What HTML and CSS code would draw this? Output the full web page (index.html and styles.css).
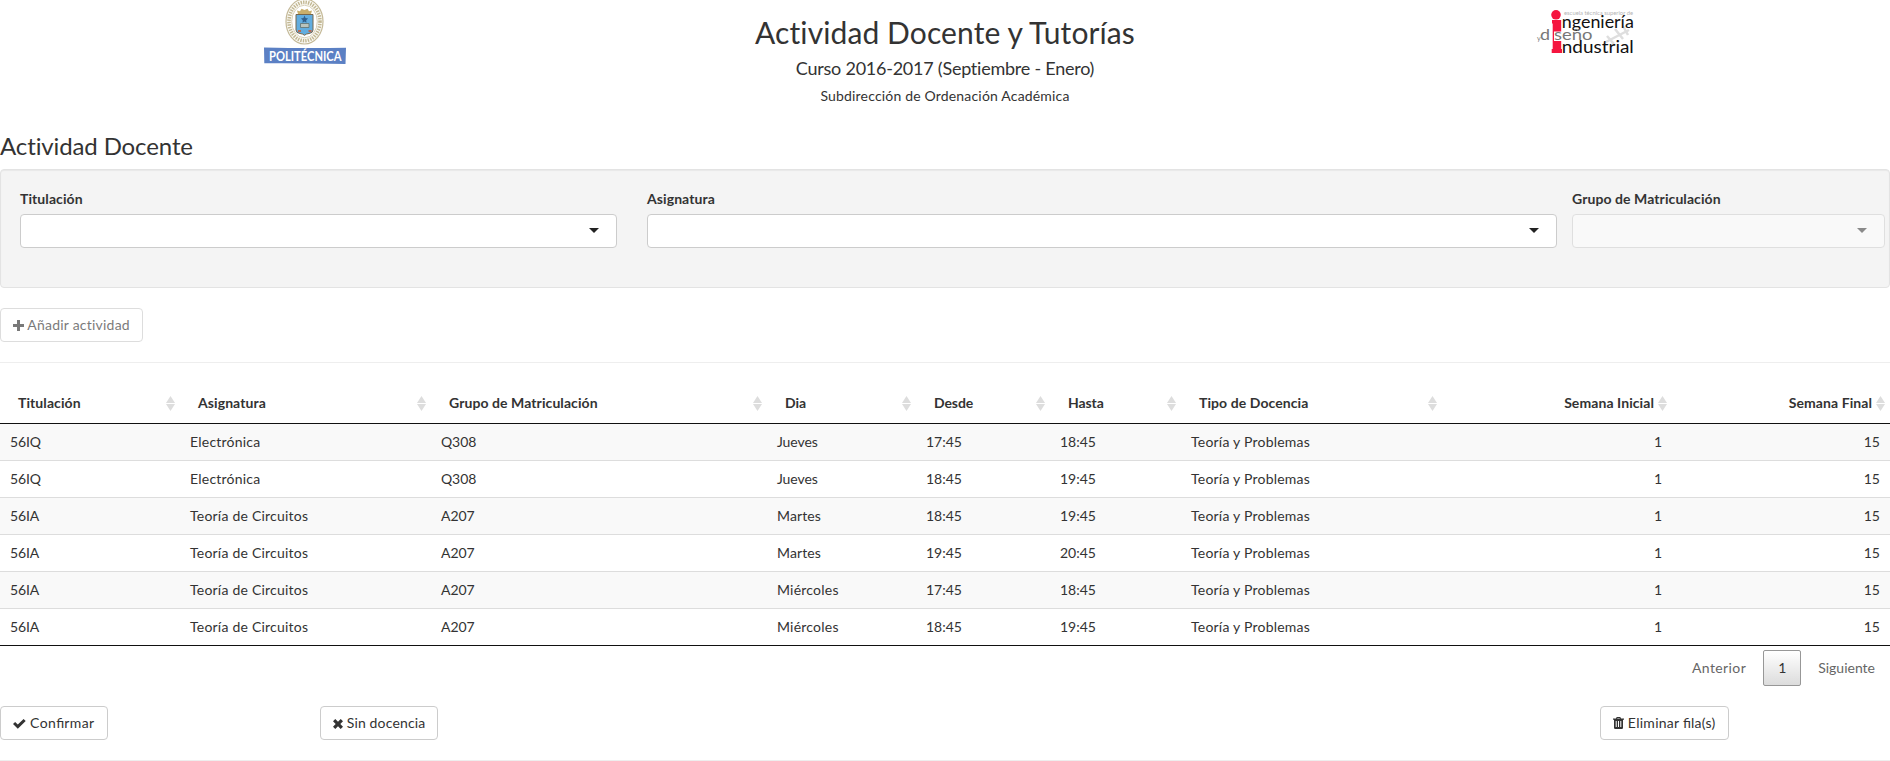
FILE: index.html
```
<!DOCTYPE html>
<html lang="es">
<head>
<meta charset="utf-8">
<title>Actividad Docente y Tutorías</title>
<link rel="stylesheet" href="styles.css">
</head>
<body>
<header class="masthead">
  <div class="brand brand-left">
    <svg class="logo-upm" width="84" height="66" viewBox="0 0 84 66">
      <ellipse cx="40.5" cy="21.500" rx="18.500" ry="22.500" fill="#fbfaf5" stroke="#c4b998" stroke-width="1.200"/>
      <ellipse cx="40.5" cy="21.500" rx="15.500" ry="19.200" fill="none" stroke="#c2b793" stroke-width="3.600" stroke-dasharray="1.400 1.100"/>
      <ellipse cx="40.5" cy="21.500" rx="12.800" ry="16.300" fill="#fff" stroke="#cfc5a8" stroke-width=".8"/>
      <path d="M34 14l-1-3.500 3 .8 1.500-2.600 3 1.300 3-1.300 1.500 2.600 3-.8-1 3.500z" fill="#c9ae6a"/>
      <path d="M32 14.500h17v15.500q0 3-4 3.500-3 .3-4.500 1.800-1.500-1.500-4.500-1.800-4-.5-4-3.500z" fill="#62addf" stroke="#75664d" stroke-width="1"/>
      <path d="M36.500 23.500h8.500v4h-8.500z" fill="#b9c4bd" stroke="#61716f" stroke-width=".8"/>
      <path d="M40.500 15.500l1 2.500 2.600.5-1.900 1.700.3 2.500-2-1.200-2 1.200.3-2.500-1.900-1.700 2.600-.5z" fill="#31608d"/>
      <path d="M34 30h3v2h-3zM44.500 30h3v2h-3z" fill="#bd6a51"/>
      <path d="M0 47.400q42 1 82 .3l-.5 16.400Q40 63 .3 63.300z" fill="#5b80c4"/>
      <text class="upm-name" x="5" y="60.600" textLength="72.500" lengthAdjust="spacingAndGlyphs">POLITÉCNICA</text>
    </svg>
  </div>
  <div class="headline">
    <h1>Actividad Docente y Tutorías</h1>
    <h2>Curso 2016-2017 (Septiembre - Enero)</h2>
    <p>Subdirección de Ordenación Académica</p>
  </div>
  <div class="brand brand-right">
    <svg class="logo-etsidi" width="100" height="60" viewBox="0 0 100 60">
      <path d="M66 43L91 30M69 36l7 8M77 29l8 10M85 26l5 9" stroke="#dedede" stroke-width="2.500" fill="none"/>
      <circle cx="18" cy="14.800" r="4.800" fill="#f5153f"/>
      <path d="M14 20h9.200v29H24v4H13.700v-4h1V23.500H14z" fill="#f5153f"/>
      <path d="M16 31.500h8v9.500h-8z" fill="#fff"/>
      <text class="etsidi-top" x="26" y="14.500" textLength="69" lengthAdjust="spacingAndGlyphs">escuela técnica superior de</text>
      <text class="etsidi-main" x="23.800" y="27.700" textLength="72" lengthAdjust="spacingAndGlyphs">ngeniería</text>
      <text class="etsidi-mid" x="-1" y="41" font-size="7">y</text>
      <text class="etsidi-mid" x="2" y="39.800" font-size="16" textLength="10" lengthAdjust="spacingAndGlyphs">d</text>
      <text class="etsidi-mid" x="16" y="39.800" font-size="15.500" textLength="38.500" lengthAdjust="spacingAndGlyphs">seño</text>
      <text class="etsidi-main" x="23.800" y="52.500" textLength="72" lengthAdjust="spacingAndGlyphs">ndustrial</text>
    </svg>
  </div>
</header>

<h3 class="section-title">Actividad Docente</h3>

<section class="well">
  <div class="field"><label>Titulación</label><div class="select"><i class="caret"></i></div></div>
  <div class="field"><label>Asignatura</label><div class="select"><i class="caret"></i></div></div>
  <div class="field"><label>Grupo de Matriculación</label><div class="select disabled"><i class="caret"></i></div></div>
</section>

<button class="btn btn-add" disabled><svg width="11" height="11" viewBox="0 0 11 11"><path d="M4 0h3v4h4v3H7v4H4V7H0V4h4z"/></svg> Añadir actividad</button>
<hr>

<table class="grid">
  <colgroup><col class="c1"><col class="c2"><col class="c3"><col class="c4"><col class="c5"><col class="c6"><col class="c7"><col class="c8"><col class="c9"></colgroup>
  <thead><tr><th>Titulación</th><th>Asignatura</th><th>Grupo de Matriculación</th><th class="tight">Dia</th><th class="tight">Desde</th><th class="tight">Hasta</th><th>Tipo de Docencia</th><th class="num">Semana Inicial</th><th class="num">Semana Final</th></tr></thead>
  <tbody>
    <tr><td class="code">56IQ</td><td class="wide">Electrónica</td><td class="code">Q308</td><td class="code">Jueves</td><td>17:45</td><td>18:45</td><td class="wide">Teoría y Problemas</td><td class="num">1</td><td class="num">15</td></tr>
    <tr><td class="code">56IQ</td><td class="wide">Electrónica</td><td class="code">Q308</td><td class="code">Jueves</td><td>18:45</td><td>19:45</td><td class="wide">Teoría y Problemas</td><td class="num">1</td><td class="num">15</td></tr>
    <tr><td class="code">56IA</td><td class="wide">Teoría de Circuitos</td><td class="code">A207</td><td class="mid">Martes</td><td>18:45</td><td>19:45</td><td class="wide">Teoría y Problemas</td><td class="num">1</td><td class="num">15</td></tr>
    <tr><td class="code">56IA</td><td class="wide">Teoría de Circuitos</td><td class="code">A207</td><td class="mid">Martes</td><td>19:45</td><td>20:45</td><td class="wide">Teoría y Problemas</td><td class="num">1</td><td class="num">15</td></tr>
    <tr><td class="code">56IA</td><td class="wide">Teoría de Circuitos</td><td class="code">A207</td><td class="wide">Miércoles</td><td>17:45</td><td>18:45</td><td class="wide">Teoría y Problemas</td><td class="num">1</td><td class="num">15</td></tr>
    <tr><td class="code">56IA</td><td class="wide">Teoría de Circuitos</td><td class="code">A207</td><td class="wide">Miércoles</td><td>18:45</td><td>19:45</td><td class="wide">Teoría y Problemas</td><td class="num">1</td><td class="num">15</td></tr>
  </tbody>
</table>

<nav class="pager"><a class="prev">Anterior</a><a class="current">1</a><a>Siguiente</a></nav>

<div class="actions">
  <div class="slot-a"><button class="btn btn-confirm"><svg width="13" height="10" viewBox="0 0 13 10"><path d="M0 5l2.100-2.100 2.700 2.600L10.600 0l2.100 2.100-7.900 7.600z"/></svg> Con<span class="lig">fi</span>rmar</button></div>
  <div class="slot-b"><button class="btn btn-none"><svg width="10" height="10" viewBox="0 0 10 10"><path d="M2.300 0L5 2.700 7.700 0 10 2.300 7.300 5 10 7.700 7.700 10 5 7.300 2.300 10 0 7.700 2.700 5 0 2.300z"/></svg> Sin docencia</button></div>
  <div><button class="btn btn-remove"><svg width="11" height="12" viewBox="0 0 11 12"><path fill-rule="evenodd" d="M3 1.500L3.700 0h3.600L8 1.500h3v1.200h-1v8q0 1.300-1.200 1.300H2.200Q1 12 1 10.700v-8H0V1.500zM4.100 1.500h2.800L6.600 1H4.400zM2.700 4v6h1V4zm2.300 0v6h1V4zm2.300 0v6h1V4z"/></svg> Eliminar <span class="lig">fi</span>la(s)</button></div>
</div>
<hr class="end">
</body>
</html>
```
FILE: styles.css
```
* { box-sizing: border-box; }
html { overflow: hidden; }
body { margin: 0; font: 14px/20px Lato, sans-serif; color: #333; background: #fff; }

.masthead { display: grid; grid-template-columns: 1fr 630px 1fr; height: 121px; }
.brand svg { display: block; overflow: visible; }
.brand-left { padding-left: 264px; }
.brand-right { padding-left: 278px; }
.headline { text-align: center; padding-top: 15px; }
.headline h1 { margin: 0; font-size: 30px; line-height: 35px; font-weight: 400; letter-spacing: .1px; }
.headline h2 { margin: 8px 0 0; font-size: 18px; line-height: 20px; font-weight: 400; letter-spacing: -.24px; }
.headline p { margin: 8px 0 0; letter-spacing: .18px; }
.upm-name { font: 700 13.5px Lato, sans-serif; fill: #fff; }
.etsidi-top { font: 6.5px Lato, sans-serif; fill: #b5b5b5; }
.etsidi-main { font: 17px Lato, sans-serif; fill: #111; }
.etsidi-mid { font-family: Lato, sans-serif; fill: #777; }

.section-title { margin: 0; padding: 11px 0 10px; height: 48px; font-size: 24px; line-height: 27px; font-weight: 400; letter-spacing: -.12px; }

.well { display: grid; grid-template-columns: 612px 910px 313px; column-gap: 15px; height: 119px; padding: 19px 4px 0 19px; border: 1px solid #e3e3e3; border-radius: 4px; background: #f4f4f4; box-shadow: inset 0 1px 1px rgba(0, 0, 0, .05); }
.well .field:first-child .select { width: 597px; }
.field label { display: block; margin-bottom: 5px; font-weight: 700; letter-spacing: .08px; }
.select { display: flex; align-items: center; justify-content: flex-end; height: 34px; padding-right: 17px; border: 1px solid #ccc; border-radius: 4px; background: #fff; }
.select.disabled { opacity: .5; }
.caret { width: 0; height: 0; margin-bottom: 1px; border: 5px solid transparent; border-top-color: #222; border-bottom: 0; }

.btn { height: 34px; padding: 6px 0 6px 12px; border: 1px solid #ccc; border-radius: 4px; background: #fff; color: #333; font: 14px/20px Lato, sans-serif; text-align: left; white-space: nowrap; }
.btn svg { fill: currentColor; vertical-align: -1px; }
.btn[disabled] { opacity: .65; }
.btn-add { display: block; width: 143px; margin-top: 20px; letter-spacing: .22px; }
.btn-confirm { width: 108px; letter-spacing: .42px; }
.btn-none { width: 118px; letter-spacing: .15px; }
.btn-remove { width: 129px; letter-spacing: .27px; }
.lig { letter-spacing: 0; }
hr { margin: 20px 0; border: 0; border-top: 1px solid #eee; }

.grid { width: 1890px; table-layout: fixed; border-collapse: separate; border-spacing: 0; border-bottom: 1px solid #111; }
.c1 { width: 180px; } .c2 { width: 251px; } .c3 { width: 336px; } .c4 { width: 149px; } .c5 { width: 134px; }
.c6 { width: 131px; } .c7 { width: 261px; } .c8 { width: 230px; } .c9 { width: 218px; }
.grid th { position: relative; height: 41px; padding: 10px 18px; border-bottom: 1px solid #111; text-align: left; font-weight: 700; letter-spacing: .08px; }
.grid th.tight { letter-spacing: -.1px; }
.grid th::before, .grid th::after { content: ""; position: absolute; right: 5px; width: 9px; height: 7px; background: #ddd; }
.grid th::before { top: 13px; clip-path: polygon(50% 0, 100% 100%, 0 100%); }
.grid th::after { top: 21px; clip-path: polygon(0 0, 100% 0, 50% 100%); }
.grid td { padding: 8px 10px; border-top: 1px solid #ddd; }
.grid tbody tr:first-child td { border-top: 0; }
.grid tbody tr:nth-child(odd) { background: #f9f9f9; }
.grid .num { text-align: right; }
.grid .wide { letter-spacing: .22px; }
.grid .mid { letter-spacing: .1px; }
.grid .code { letter-spacing: -.1px; }

.pager { display: flex; justify-content: flex-end; gap: 2px; padding-top: 4px; height: 60px; }
.pager a { height: 36px; padding: 7px 14px; border: 1px solid transparent; border-radius: 2px; color: #666; }
.pager .prev { letter-spacing: .4px; }
.pager .current { width: 38px; border-color: #979797; background: linear-gradient(#fff, #dcdcdc); color: #333; text-align: center; }

.actions { display: flex; }
.slot-a { width: 320px; }
.slot-b { width: 1280px; }
.end { margin-bottom: 0; }
```
